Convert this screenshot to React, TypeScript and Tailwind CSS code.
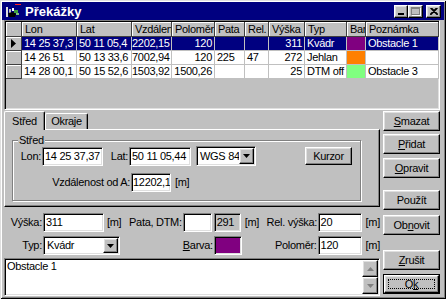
import React from "react";

const raised =
  "border border-t-white border-l-white border-r-black border-b-black shadow-[inset_-1px_-1px_0_#808080,inset_1px_1px_0_#dfdfdf] bg-[#c0c0c0]";
const sunken =
  "border border-t-[#808080] border-l-[#808080] border-r-white border-b-white shadow-[inset_1px_1px_0_#000,inset_-1px_-1px_0_#dfdfdf]";

const cols = [
  { w: "w-[55px]", label: "Lon", right: false },
  { w: "w-[55px]", label: "Lat", right: false },
  { w: "w-[40px]", label: "Vzdálen", right: true },
  { w: "w-[43px]", label: "Poloměr", right: true },
  { w: "w-[30px]", label: "Pata", right: false },
  { w: "w-[24px]", label: "Rel.", right: false },
  { w: "w-[36px]", label: "Výška", right: true },
  { w: "w-[42px]", label: "Typ", right: false },
  { w: "w-[19px]", label: "Bar", right: false },
  { w: "w-[73px]", label: "Poznámka", right: false },
];

const rows = [
  { sel: true, color: "bg-[#800080]", v: ["14 25 37,3", "50 11 05,4", "2202,15", "120", "", "", "311", "Kvádr", "", "Obstacle 1"] },
  { sel: false, color: "bg-[#ff8000]", v: ["14 26 51", "50 13 33,6", "7002,94", "120", "225", "47", "272", "Jehlan", "", ""] },
  { sel: false, color: "bg-[#80ff80]", v: ["14 28 00,1", "50 15 52,6", "1503,92", "1500,26", "", "", "25", "DTM off", "", "Obstacle 3"] },
];

function DownArrow({ gray }: { gray?: boolean }) {
  return (
    <svg width="7" height="4" viewBox="0 0 7 4">
      <polygon points="0,0 7,0 3.5,4" fill={gray ? "#808080" : "#000"} />
    </svg>
  );
}

function Field({ w, children, gray }: { w: string; children?: React.ReactNode; gray?: boolean }) {
  return (
    <div
      className={`${w} h-[19px] shrink-0 ${sunken} ${gray ? "bg-[#c0c0c0]" : "bg-white"} pl-[2px] leading-[17px] overflow-hidden whitespace-nowrap`}
    >
      {children}
    </div>
  );
}

function Combo({ w, h, children }: { w: string; h: string; children: React.ReactNode }) {
  return (
    <div className={`${w} ${h} shrink-0 ${sunken} bg-white flex p-[1px]`}>
      <div className="flex-1 pl-[2px] flex items-center whitespace-nowrap overflow-hidden">{children}</div>
      <div className={`w-[15px] h-full ${raised} flex items-center justify-center`}>
        <DownArrow />
      </div>
    </div>
  );
}

function Button({ h, children, mt, def }: { h: string; mt: string; children: React.ReactNode; def?: boolean }) {
  if (def) {
    return (
      <div className={`${mt} ${h} w-[57px] border border-black`}>
        <div className={`w-full h-full ${raised} flex items-center justify-center p-[3px]`}>
          <div className="w-full h-full border border-dotted border-black flex items-center justify-center leading-none">
            {children}
          </div>
        </div>
      </div>
    );
  }
  return <div className={`${mt} ${h} w-[57px] ${raised} flex items-center justify-center leading-none`}>{children}</div>;
}

function TitleIcon() {
  return (
    <svg width="16" height="14" viewBox="0 0 16 14">
      <rect x="10" y="0" width="6" height="1" fill="#ff2020" />
      <rect x="1" y="3" width="2" height="10" fill="#e0e0e0" />
      <rect x="4" y="5" width="2" height="8" fill="#c0c0c0" />
      <path d="M3 9 L8 8 L11 10 L10 13 L4 13 Z" fill="#000" />
      <rect x="9" y="6" width="4" height="3" fill="#40a040" />
      <rect x="11" y="9" width="3" height="2" fill="#80c080" />
      <rect x="7" y="4" width="2" height="3" fill="#ffffff" />
    </svg>
  );
}

export default function App() {
  return (
    <div className="w-[446px] h-[299px] bg-[#c0c0c0] p-[2px] overflow-hidden whitespace-nowrap text-[11px] tracking-[-0.3px] text-black font-['Liberation_Sans',Arial,sans-serif] shadow-[inset_1px_1px_0_#dfdfdf,inset_-1px_-1px_0_#000,inset_2px_2px_0_#fff,inset_-2px_-2px_0_#808080]">
      {/* Title bar */}
      <div className="h-[18px] bg-[#000080] flex items-center pl-[3px] pr-[3px]">
        <TitleIcon />
        <span className="ml-[4px] text-white font-bold text-[13px] tracking-normal leading-none">Překážky</span>
        <div className="ml-auto flex items-center">
          <div className={`w-[14px] h-[13px] ${raised} flex items-end justify-start pl-[3px] pb-[2px]`}>
            <div className="w-[6px] h-[2px] bg-black" />
          </div>
          <div className={`w-[15px] h-[13px] ${raised} flex items-center justify-center`}>
            <div className="w-[9px] h-[8px] border border-[#808080] border-t-2 shadow-[1px_1px_0_#fff]" />
          </div>
          <div className={`ml-[3px] w-[15px] h-[13px] ${raised} flex items-center justify-center`}>
            <svg width="8" height="7" viewBox="0 0 8 7">
              <path d="M0.5 0 L7.5 7 M7.5 0 L0.5 7 M1.5 0 L8 6.5 M6.5 0 L0 6.5" stroke="#000" strokeWidth="1.2" />
            </svg>
          </div>
        </div>
      </div>

      {/* Grid */}
      <div className={`ml-[2px] w-[436px] h-[90px] ${sunken} p-[1px] bg-[#c0c0c0] overflow-hidden`}>
        <div className="flex">
          <div className="w-[16px] h-[15px] shrink-0 border-r border-b border-[#404040] shadow-[inset_1px_1px_0_#fff]" />
          {cols.map((c) => (
            <div
              key={c.label}
              className={`${c.w} h-[15px] shrink-0 border-r border-b border-[#404040] shadow-[inset_1px_1px_0_#fff] pl-[3px] leading-[14px] overflow-hidden whitespace-nowrap`}
            >
              {c.label}
            </div>
          ))}
        </div>
        {rows.map((r, i) => (
          <div key={i} className="flex">
            <div className="w-[16px] h-[14px] shrink-0 border-r border-b border-[#404040] shadow-[inset_1px_1px_0_#fff] flex items-center pl-[5px]">
              {r.sel && (
                <svg width="5" height="9" viewBox="0 0 5 9">
                  <polygon points="0,0 5,4.5 0,9" fill="#000" />
                </svg>
              )}
            </div>
            {cols.map((c, j) => {
              const isBar = j === 8;
              const bg = isBar ? r.color : r.sel ? "bg-[#000080] text-white" : "bg-white";
              return (
                <div
                  key={j}
                  className={`${c.w} h-[14px] shrink-0 border-r border-b border-[#c0c0c0] ${bg} ${c.right ? "text-right pr-[2px]" : "pl-[2px]"} leading-[13px] overflow-hidden whitespace-nowrap`}
                >
                  {r.v[j]}
                </div>
              );
            })}
          </div>
        ))}
      </div>

      {/* Bottom */}
      <div className="ml-[2px] mt-[1px] flex">
        {/* Left column */}
        <div className="w-[376px] flex flex-col">
          {/* Tabs */}
          <div className="h-[18px] flex items-end">
            <div className="relative z-10 -mb-[1px] w-[41px] h-[19px] bg-[#c0c0c0] border-t border-l border-white border-r border-r-black rounded-t-[2px] shadow-[inset_-1px_0_0_#808080] flex items-center justify-center">
              Střed
            </div>
            <div className="w-[43px] h-[16px] border-t border-l border-white border-r border-r-black rounded-t-[2px] shadow-[inset_-1px_0_0_#808080] flex items-center justify-center">
              Okraje
            </div>
          </div>
          {/* Panel */}
          <div className="h-[78px] border border-t-white border-l-white border-r-black border-b-black shadow-[inset_-1px_-1px_0_#808080] pl-[7px] pt-[10px]">
            <div className="relative w-[349px] h-[61px] border border-[#808080] shadow-[inset_1px_1px_0_#fff,1px_1px_0_#fff]">
              <div className="absolute -top-[8px] left-[5px] px-[1px] bg-[#c0c0c0] leading-[14px]">Střed</div>
              <div className="mt-[5px] flex items-center h-[20px]">
                <div className="w-[29px] text-right pr-[1px]">Lon:</div>
                <Field w="w-[61px]">14 25 37,37</Field>
                <div className="w-[26px] text-right pr-[1px]">Lat:</div>
                <Field w="w-[62px]">50 11 05,44</Field>
                <div className="ml-[5px]">
                  <Combo w="w-[60px]" h="h-[20px]">WGS 84</Combo>
                </div>
                <div className={`ml-[49px] w-[47px] h-[18px] ${raised} flex items-center justify-center`}>Kurzor</div>
              </div>
              <div className="mt-[7px] flex items-center h-[19px]">
                <div className="w-[118px] text-right pr-[1px]">Vzdálenost od A:</div>
                <div className="w-[40px] h-[19px] shrink-0 border border-t-[#808080] border-l-[#808080] border-r-white border-b-white shadow-[inset_1px_1px_0_#000,inset_-1px_-1px_0_#dfdfdf] bg-white pl-[1px] leading-[17px] overflow-hidden">
                  12202,1
                </div>
                <div className="ml-[4px]">[m]</div>
              </div>
            </div>
          </div>
          {/* Row A */}
          <div className="mt-[6px] h-[19px] flex items-center">
            <div className="w-[39px] text-right pr-[1px]">Výška:</div>
            <Field w="w-[61px]">311</Field>
            <div className="w-[24px] pl-[3px]">[m]</div>
            <div className="w-[55px] text-right pr-[1px]">Pata, DTM:</div>
            <Field w="w-[29px]" />
            <div className="ml-[2px]">
              <Field w="w-[27px]" gray>
                291
              </Field>
            </div>
            <div className="w-[26px] pl-[4px]">[m]</div>
            <div className="w-[51px] text-right pr-[1px]">Rel. výška:</div>
            <Field w="w-[44px]">20</Field>
            <div className="pl-[4px]">[m]</div>
          </div>
          {/* Row B */}
          <div className="mt-[4px] h-[19px] flex items-center">
            <div className="w-[39px] text-right pr-[1px]">Typ:</div>
            <Combo w="w-[77px]" h="h-[19px]">Kvádr</Combo>
            <div className="w-[94px] text-right pr-[1px]">
              <span className="underline">B</span>arva:
            </div>
            <div className={`w-[28px] h-[19px] ${sunken} p-[1px]`}>
              <div className="w-full h-full bg-[#800080]" />
            </div>
            <div className="w-[76px] text-right pr-[1px]">Poloměr:</div>
            <Field w="w-[44px]">120</Field>
            <div className="pl-[4px]">[m]</div>
          </div>
          {/* Memo */}
          <div className={`mt-[3px] h-[38px] w-[376px] ${sunken} bg-white p-[1px] flex`}>
            <div className="flex-1 pl-[1px] leading-[13px]">Obstacle 1</div>
            <div className="w-[16px] flex flex-col bg-[#e0e0e0]">
              <div className={`h-[17px] ${raised} flex items-center justify-center`}>
                <svg width="7" height="4" viewBox="0 0 7 4">
                  <polygon points="0,4 7,4 3.5,0" fill="#808080" />
                </svg>
              </div>
              <div className={`h-[17px] ${raised} flex items-center justify-center`}>
                <DownArrow gray />
              </div>
            </div>
          </div>
        </div>

        {/* Right buttons */}
        <div className="ml-[3px] flex flex-col">
          <Button mt="mt-0" h="h-[20px]">
            <span><span className="underline">S</span>mazat</span>
          </Button>
          <Button mt="mt-[3px]" h="h-[20px]">
            <span><span className="underline">P</span>řidat</span>
          </Button>
          <Button mt="mt-[4px]" h="h-[20px]">
            <span><span className="underline">O</span>pravit</span>
          </Button>
          <Button mt="mt-[12px]" h="h-[20px]">
            <span>Použít</span>
          </Button>
          <Button mt="mt-[5px]" h="h-[20px]">
            <span>Ob<span className="underline">n</span>ovit</span>
          </Button>
          <Button mt="mt-[15px]" h="h-[20px]">
            <span><span className="underline">Z</span>rušit</span>
          </Button>
          <Button mt="mt-[4px]" h="h-[20px]" def>
            <span>O<span className="underline">k</span></span>
          </Button>
        </div>
      </div>
    </div>
  );
}
